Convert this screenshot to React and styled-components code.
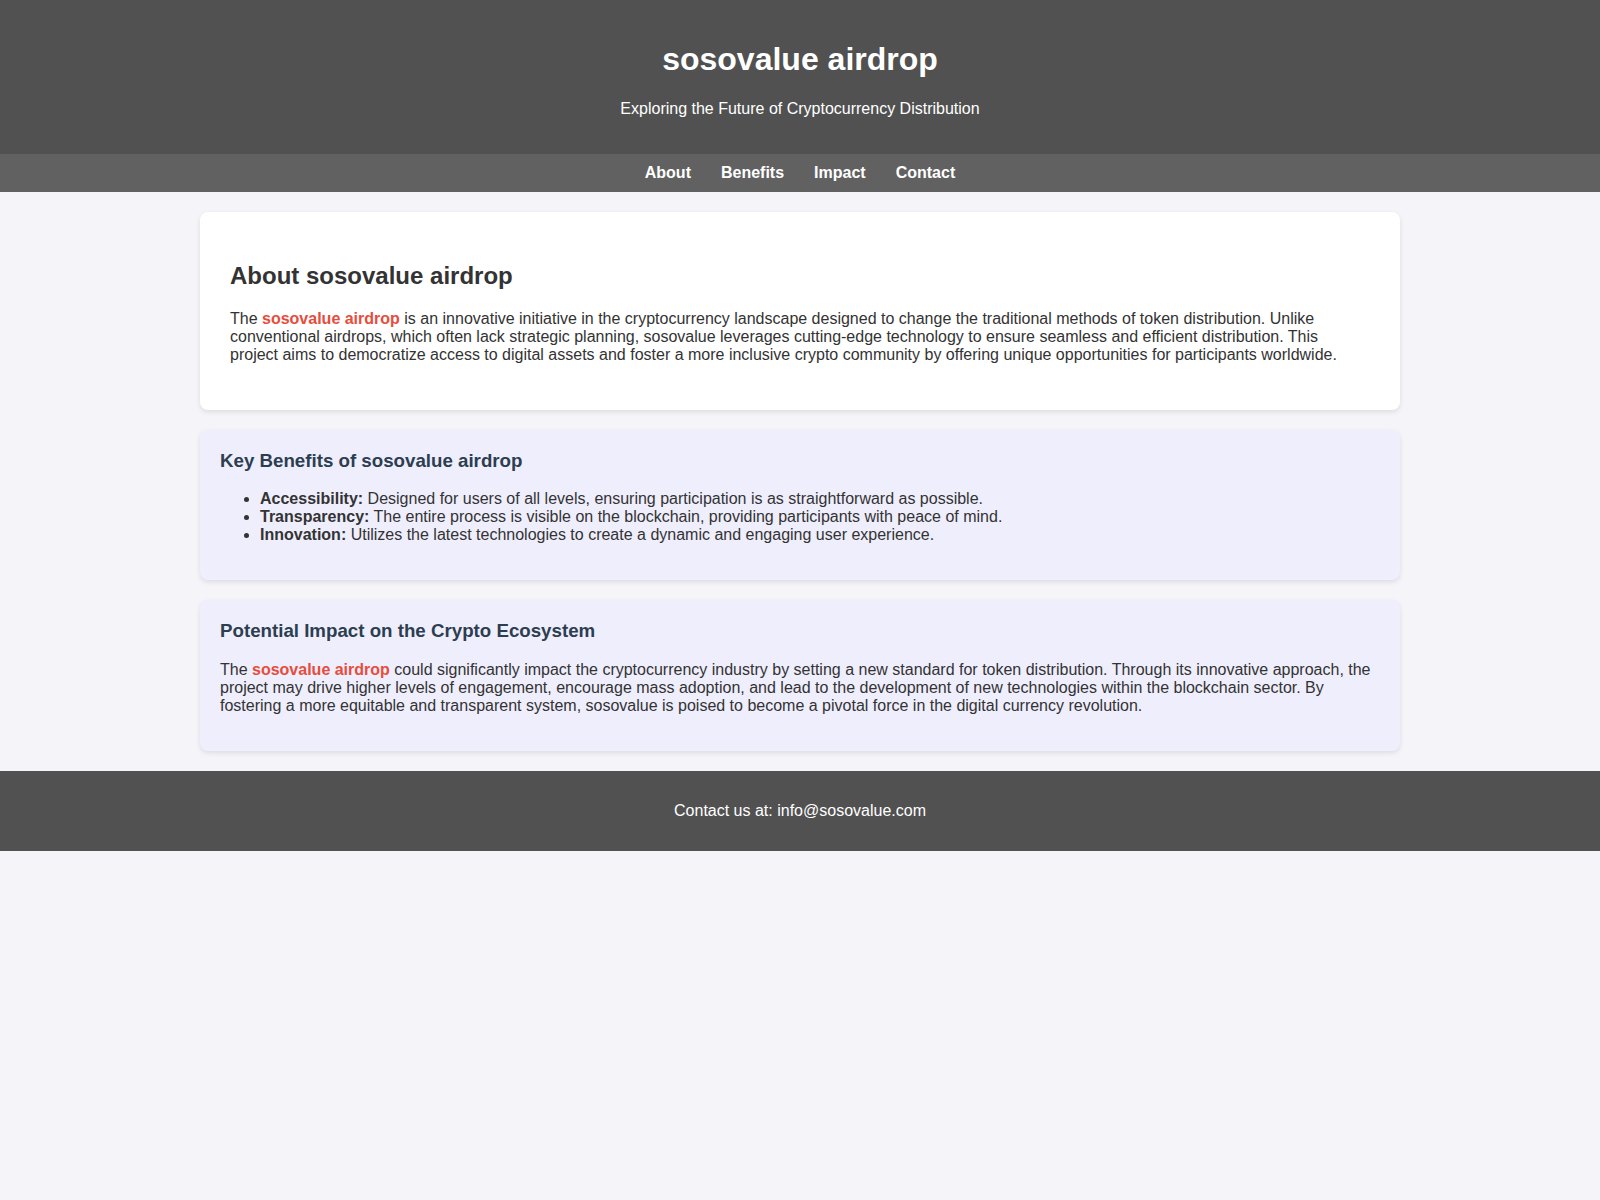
import React from "react"
import styled, { createGlobalStyle } from "styled-components"

const GlobalStyle = createGlobalStyle`
  body {
    margin: 0;
    font-family: "Liberation Sans", Arial, sans-serif;
    background: #f4f4f9;
    color: #333;
  }
`

const Header = styled.header`
  background: #515151;
  color: #fff;
  text-align: center;
  padding: 20px 0;

  h1 {
    font-size: 2em;
    margin: 0.67em 0;
  }

  p {
    margin: 16px 0;
  }
`

const Nav = styled.nav`
  background: #616161;
  display: flex;
  justify-content: center;
  padding: 10px 0;
`

const NavLink = styled.a`
  color: #fff;
  font-weight: bold;
  text-decoration: none;
  margin: 0 15px;
`

const Main = styled.main`
  max-width: 1200px;
  margin: 0 auto;
  padding: 20px 0;
  display: flex;
  flex-direction: column;
  gap: 20px;
`

const Card = styled.section`
  background: ${p => (p.$tint ? "#efeefd" : "#fff")};
  border-radius: 8px;
  box-shadow: 0 2px 5px rgba(0, 0, 0, 0.1);
  padding: ${p => (p.$tint ? "20px" : "30px")};

  h2 {
    font-size: 1.5em;
    margin: 0.83em 0;
    color: #333;
  }

  h3 {
    font-size: 1.17em;
    margin: 0 0 1em;
    color: #2c3e50;
  }

  p {
    margin: 16px 0;
    line-height: normal;
  }

  ul {
    margin: 16px 0;
    padding-left: 40px;
  }
`

const Hl = styled.strong`
  color: #e74c3c;
`

const Footer = styled.footer`
  background: #515151;
  color: #fff;
  text-align: center;
  padding: 31px 0;
`

const App = () =>
  <>
    <GlobalStyle />
    <Header>
      <h1>sosovalue airdrop</h1>
      <p>Exploring the Future of Cryptocurrency Distribution</p>
    </Header>
    <Nav>
      <NavLink href="#about">About</NavLink>
      <NavLink href="#benefits">Benefits</NavLink>
      <NavLink href="#impact">Impact</NavLink>
      <NavLink href="#contact">Contact</NavLink>
    </Nav>
    <Main>
      <Card id="about">
        <h2>About sosovalue airdrop</h2>
        <p>
          The <Hl>sosovalue airdrop</Hl> is an innovative initiative in the cryptocurrency landscape designed to change the traditional methods of token distribution. Unlike conventional airdrops, which often lack strategic planning, sosovalue leverages cutting-edge technology to ensure seamless and efficient distribution. This project aims to democratize access to digital assets and foster a more inclusive crypto community by offering unique opportunities for participants worldwide.
        </p>
      </Card>
      <Card $tint id="benefits">
        <h3>Key Benefits of sosovalue airdrop</h3>
        <ul>
          <li><strong>Accessibility:</strong> Designed for users of all levels, ensuring participation is as straightforward as possible.</li>
          <li><strong>Transparency:</strong> The entire process is visible on the blockchain, providing participants with peace of mind.</li>
          <li><strong>Innovation:</strong> Utilizes the latest technologies to create a dynamic and engaging user experience.</li>
        </ul>
      </Card>
      <Card $tint id="impact">
        <h3>Potential Impact on the Crypto Ecosystem</h3>
        <p>
          The <Hl>sosovalue airdrop</Hl> could significantly impact the cryptocurrency industry by setting a new standard for token distribution. Through its innovative approach, the project may drive higher levels of engagement, encourage mass adoption, and lead to the development of new technologies within the blockchain sector. By fostering a more equitable and transparent system, sosovalue is poised to become a pivotal force in the digital currency revolution.
        </p>
      </Card>
    </Main>
    <Footer id="contact">Contact us at: info@sosovalue.com</Footer>
  </>

export default App
